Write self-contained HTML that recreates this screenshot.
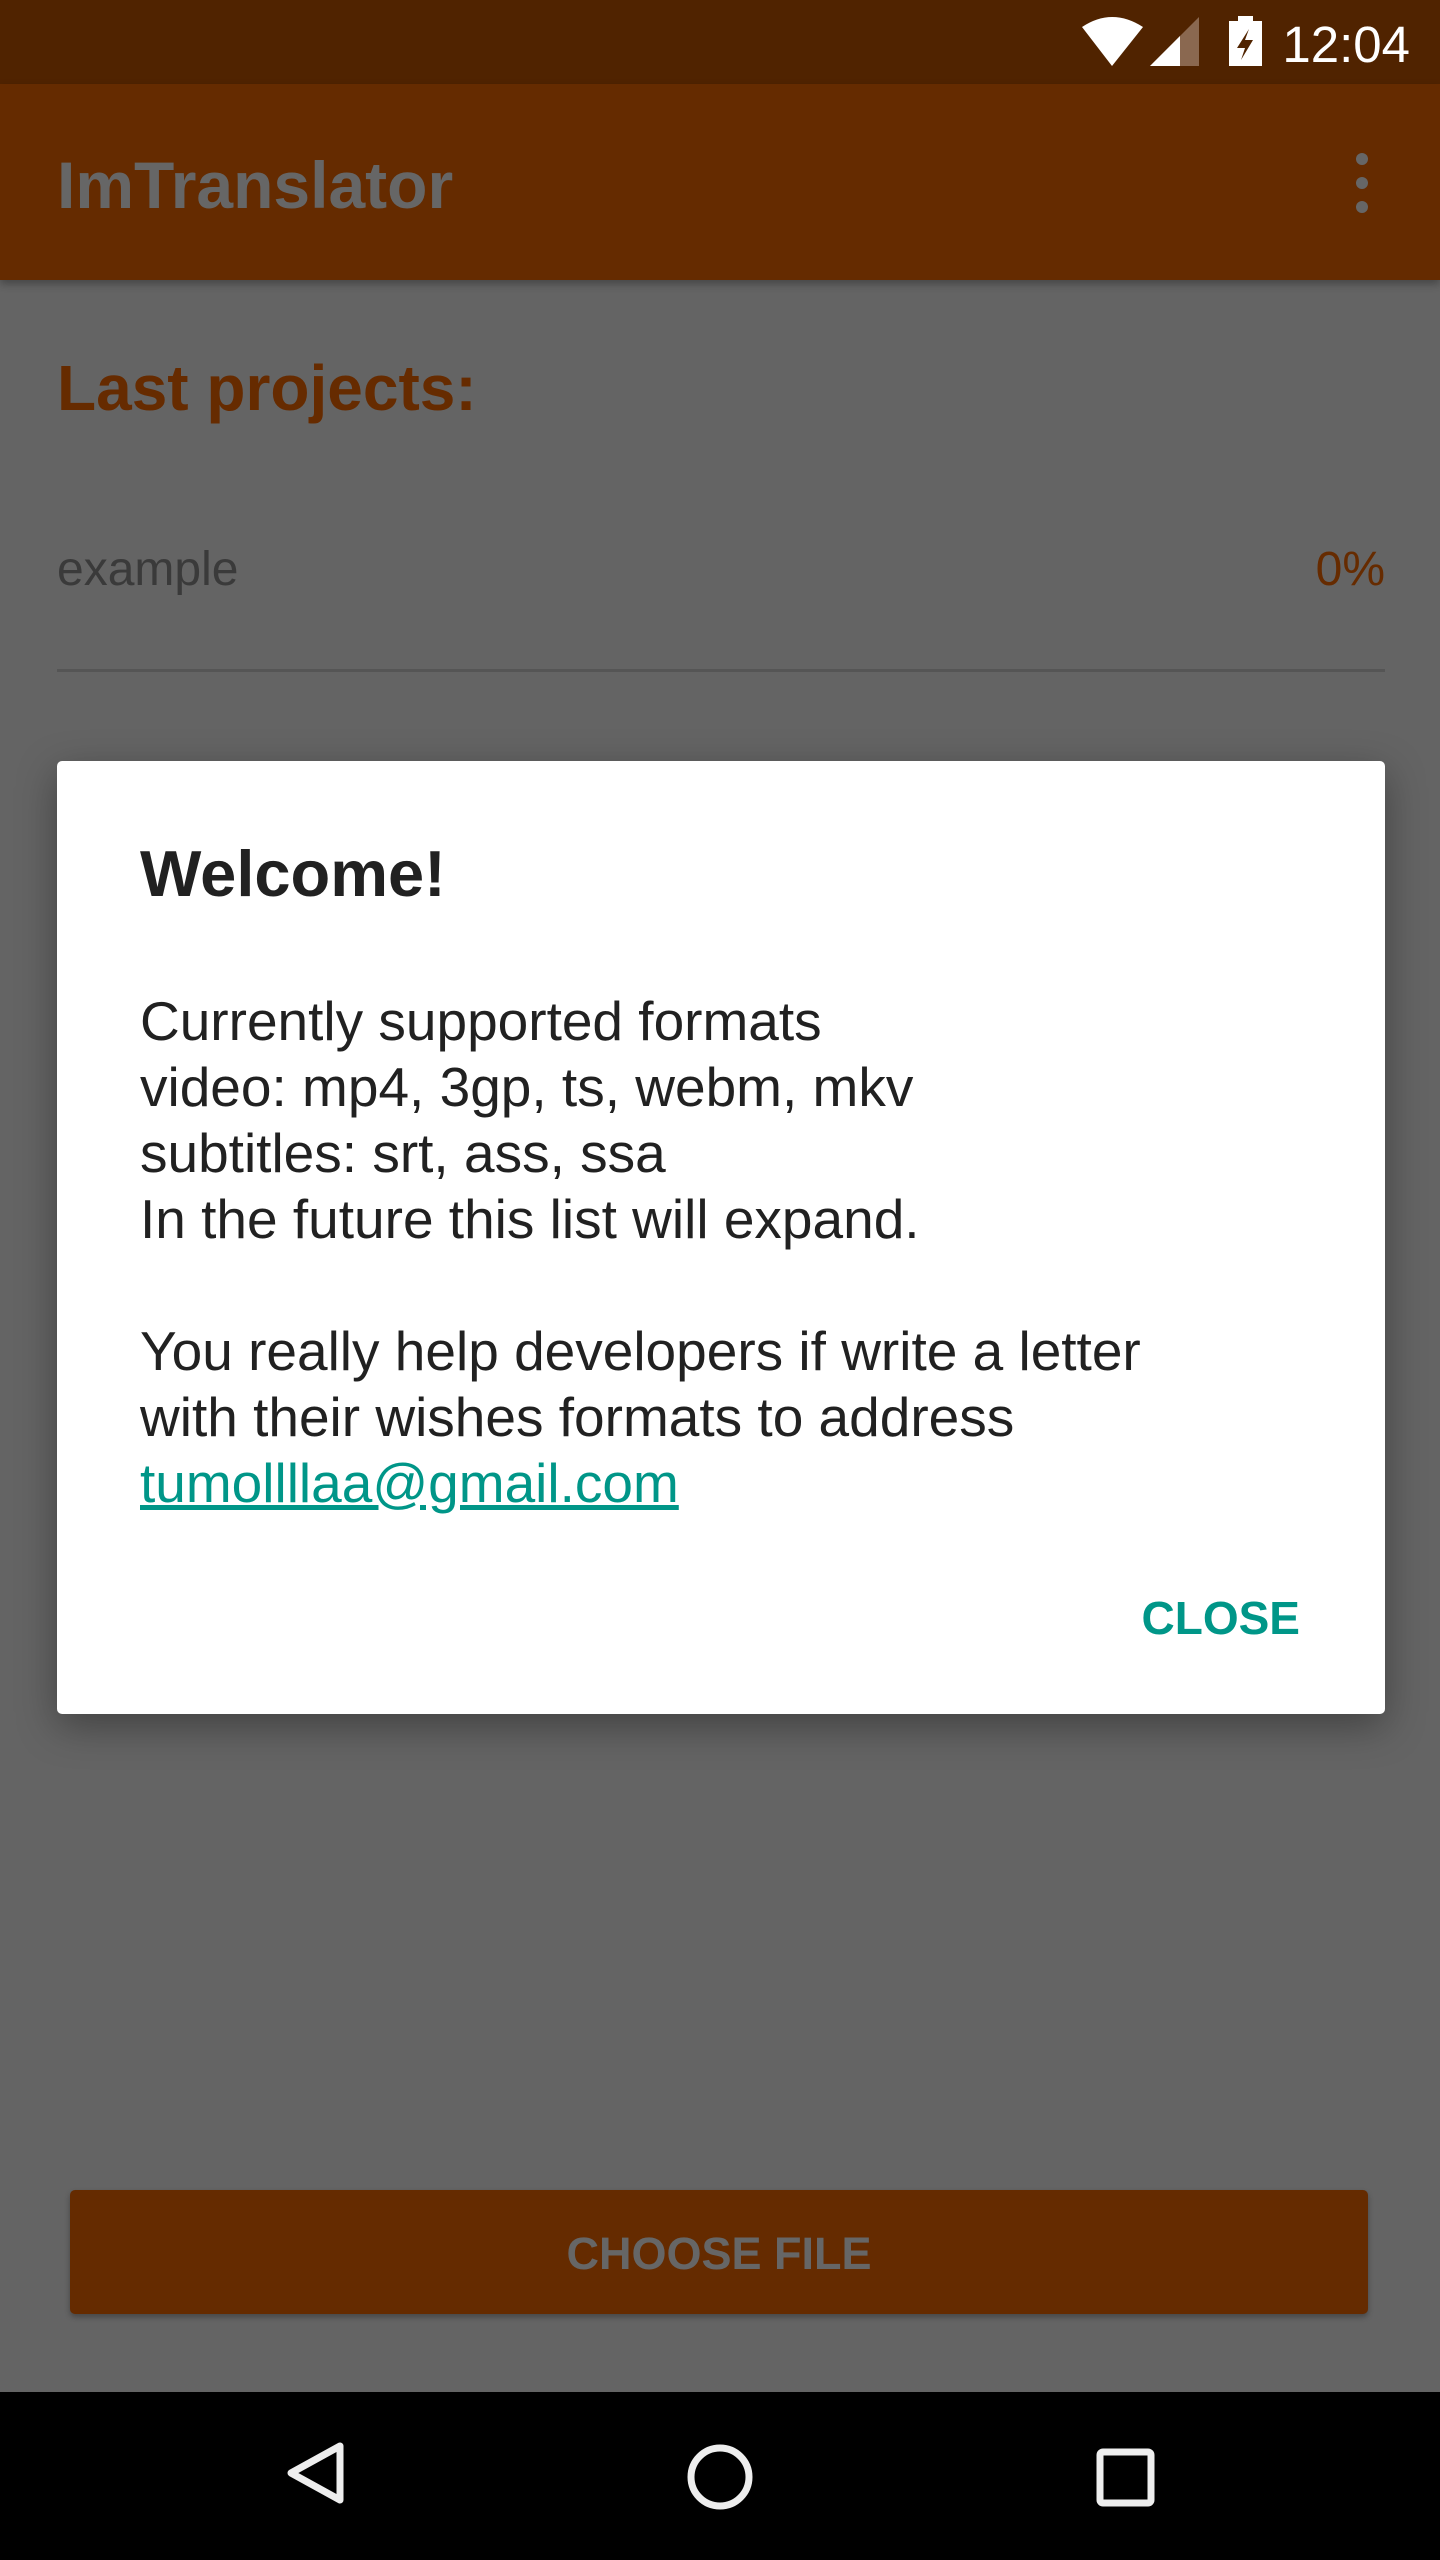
<!DOCTYPE html>
<html><head><meta charset="utf-8"><style>
*{margin:0;padding:0;box-sizing:border-box}
body{width:1440px;height:2560px;position:relative;background:#646464;font-family:"Liberation Sans",sans-serif;overflow:hidden}
.abs{position:absolute}
</style></head><body>
<div class="abs" style="left:0;top:0;width:1440px;height:84px;background:#502300"></div>
<svg class="abs" style="left:0;top:0" width="1440" height="84">
<path d="M1082 27 Q1112 7 1143 27 L1112 66 Z" fill="#fff"/>
<path d="M1150 66 L1199 17 L1199 66 Z" fill="#8a6850"/>
<path d="M1150 66 L1180 36 L1180 66 Z" fill="#fff"/>
<rect x="1229" y="21" width="33" height="45" fill="#fff"/>
<rect x="1238" y="16" width="15" height="6" fill="#fff"/>
<path d="M1249 29 L1237 48 L1245 48 L1241 60 L1253 40 L1245 40 Z" fill="#502300"/>
<text x="1410" y="62" text-anchor="end" font-family="Liberation Sans" font-size="51" fill="#fff">12:04</text>
</svg>
<div class="abs" style="left:0;top:84px;width:1440px;height:196px;background:#652b00;box-shadow:0 4px 8px rgba(0,0,0,.3)"></div>
<div class="abs" style="left:57px;top:145px;font-size:66px;font-weight:bold;color:#666;line-height:80px">ImTranslator</div>
<svg class="abs" style="left:1340px;top:150px" width="40" height="70"><circle cx="22" cy="9" r="6" fill="#666"/><circle cx="22" cy="33" r="6" fill="#666"/><circle cx="22" cy="57" r="6" fill="#666"/></svg>
<div class="abs" style="left:57px;top:348px;font-size:64px;font-weight:bold;color:#662b00;line-height:80px">Last projects:</div>
<div class="abs" style="left:57px;top:540px;font-size:48px;color:#3a3a3a;line-height:60px">example</div>
<div class="abs" style="right:55px;top:540px;font-size:48px;color:#662b00;line-height:60px">0%</div>
<div class="abs" style="left:57px;top:669px;width:1328px;height:3px;background:#555"></div>
<div class="abs" style="left:57px;top:761px;width:1328px;height:953px;background:#fff;border-radius:5px;box-shadow:0 12px 40px rgba(0,0,0,.35)"></div>
<div class="abs" style="left:140px;top:834px;font-size:65px;font-weight:bold;color:#212121;line-height:80px">Welcome!</div>
<div class="abs" style="left:140px;top:988px;font-size:55px;color:#212121;line-height:66px;white-space:nowrap">Currently supported formats<br>video: mp4, 3gp, ts, webm, mkv<br>subtitles: srt, ass, ssa<br>In the future this list will expand.<br><br>You really help developers if write a letter<br>with their wishes formats to address<br><span style="color:#009688;text-decoration:underline">tumollllaa@gmail.com</span></div>
<div class="abs" style="right:140px;top:1590px;font-size:46px;font-weight:bold;color:#009688;line-height:56px">CLOSE</div>
<div class="abs" style="left:70px;top:2190px;width:1298px;height:124px;background:#652b00;border-radius:5px;box-shadow:0 3px 6px rgba(0,0,0,.3)"></div>
<div class="abs" style="left:70px;top:2226px;width:1298px;text-align:center;font-size:45px;font-weight:bold;color:#666;line-height:56px">CHOOSE FILE</div>
<div class="abs" style="left:0;top:2392px;width:1440px;height:168px;background:#000"></div>
<svg class="abs" style="left:0;top:2392px" width="1440" height="168">
<path d="M340 54 L340 108 L291 81 Z" fill="none" stroke="#eee" stroke-width="7" stroke-linejoin="round"/>
<circle cx="720" cy="85" r="29" fill="none" stroke="#eee" stroke-width="7"/>
<rect x="1100" y="60" width="51" height="51" rx="3" fill="none" stroke="#eee" stroke-width="7"/>
</svg>
</body></html>
